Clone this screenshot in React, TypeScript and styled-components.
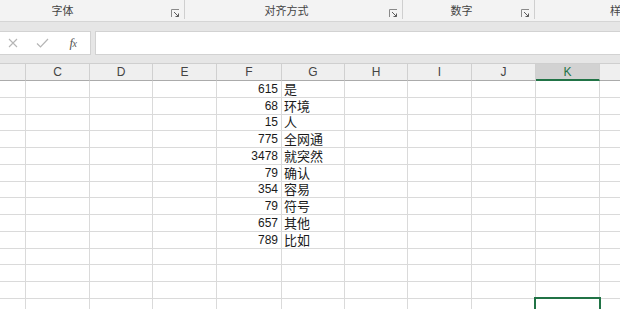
import styled, { createGlobalStyle } from 'styled-components';

const GlobalStyle = createGlobalStyle`
  html, body {
    margin: 0;
    padding: 0;
    background: #ffffff;
    overflow: hidden;
  }
  body {
    font-family: 'Liberation Sans', 'Noto Sans CJK SC', sans-serif;
  }
`;

const COLS = [26, 64, 63, 64, 65, 63, 63, 64, 64, 64, 40];
const LETTERS = ['', 'C', 'D', 'E', 'F', 'G', 'H', 'I', 'J', 'K', ''];
const ROW_HEIGHTS = [17, 17, 16, 17, 17, 17, 16, 17, 17, 17, 16, 17, 17, 20];
const SELECTED_COL = 9;
const SELECTED_ROW = 13;

const DATA: [number, string][] = [
  [615, '是'],
  [68, '环境'],
  [15, '人'],
  [775, '全网通'],
  [3478, '就突然'],
  [79, '确认'],
  [354, '容易'],
  [79, '符号'],
  [657, '其他'],
  [789, '比如'],
];

const GROUPS = [
  { label: '字体', width: 229, offset: -45, launcher: true },
  { label: '对齐方式', width: 217, offset: 0, launcher: true },
  { label: '数字', width: 131, offset: 0, launcher: true },
  { label: '样式', width: 172, offset: 0, launcher: false },
];

const Page = styled.div`
  width: 620px;
  height: 309px;
  overflow: hidden;
  background: #ffffff;
`;

const Ribbon = styled.div`
  display: flex;
  height: 21px;
  background: #f3f3f3;
  border-bottom: 1px solid #d5d5d5;
  overflow: hidden;
`;

const Group = styled.div<{ $w: number; $offset: number }>`
  flex: 0 0 ${p => p.$w}px;
  margin-left: ${p => p.$offset}px;
  display: flex;
  align-items: flex-end;
  height: 19px;
  border-right: 1px solid #cfcfcf;
`;

const GroupLabel = styled.div`
  flex: 1;
  text-align: center;
  font-family: 'Noto Sans CJK SC', sans-serif;
  font-size: 11px;
  line-height: 14px;
  padding-bottom: 2px;
  color: #444444;
  white-space: nowrap;
`;

const Launcher = styled.svg`
  flex: 0 0 9px;
  width: 9px;
  height: 9px;
  margin: 0 4px 1px 1px;
`;

const FormulaArea = styled.div`
  height: 41px;
  background: #e6e6e6;
  display: flex;
  align-items: flex-start;
  padding-top: 9px;
  box-sizing: border-box;
  gap: 3px;
`;

const FxBox = styled.div`
  width: 91px;
  height: 24px;
  box-sizing: border-box;
  background: #ffffff;
  border: 1px solid #d2d2d2;
  border-left: 0;
  display: flex;
  align-items: center;
`;

const FxButton = styled.div<{ $w: number }>`
  width: ${p => p.$w}px;
  display: flex;
  justify-content: center;
  align-items: center;
  color: #b5b5b5;
`;

const FxText = styled.span`
  font-family: 'Liberation Serif', serif;
  font-style: italic;
  font-size: 13px;
  color: #555555;
  letter-spacing: -0.5px;
`;

const FxSub = styled.span`
  font-size: 10px;
`;

const FormulaInput = styled.div`
  flex: 1;
  height: 24px;
  box-sizing: border-box;
  background: #ffffff;
  border: 1px solid #d2d2d2;
  border-right: 0;
  margin-left: 1px;
`;

const Grid = styled.div`
  display: grid;
  grid-template-columns: ${COLS.map(c => `${c}px`).join(' ')};
`;

const HeaderRow = styled(Grid)`
  height: 18px;
  background: #efefef;
  border-top: 1px solid #cfcfcf;
  box-sizing: border-box;
`;

const HeaderCell = styled.div<{ $selected?: boolean }>`
  box-sizing: border-box;
  height: 17px;
  border-right: 1px solid #d0d0d0;
  border-bottom: ${p => (p.$selected ? '2px solid #217346' : '1px solid #ababab')};
  background: ${p => (p.$selected ? '#d2d2d2' : 'transparent')};
  color: ${p => (p.$selected ? '#217346' : '#444444')};
  font-size: 12px;
  line-height: 16px;
  text-align: center;
`;

const Row = styled(Grid)<{ $h: number }>`
  height: ${p => p.$h}px;
`;

const Cell = styled.div<{ $align?: 'left' | 'right' }>`
  position: relative;
  box-sizing: border-box;
  border-right: 1px solid #dadada;
  border-bottom: 1px solid #dadada;
  display: flex;
  align-items: flex-end;
  justify-content: ${p => (p.$align === 'right' ? 'flex-end' : 'flex-start')};
  padding: 0 3px 1px 2px;
  color: #1a1a1a;
  white-space: nowrap;
`;

const NumberText = styled.span`
  display: block;
  font-family: 'Liberation Sans', sans-serif;
  font-size: 12px;
  line-height: 14px;
`;

const CjkText = styled.span`
  display: block;
  font-family: 'Noto Sans CJK SC', sans-serif;
  font-size: 13px;
  line-height: 14px;
`;

const Selection = styled.div`
  position: absolute;
  left: -2px;
  right: -2px;
  top: -2px;
  height: 40px;
  border: 2px solid #217346;
  pointer-events: none;
`;

function LauncherIcon() {
  return (
    <Launcher viewBox="0 0 9 9">
      <path d="M0.5 8V0.5H8" fill="none" stroke="#8a8a8a" strokeWidth="1" />
      <path d="M3 3L7.5 7.5M7.5 4.5V7.5H4.5" fill="none" stroke="#5a5a5a" strokeWidth="1" />
    </Launcher>
  );
}

export default function App() {
  return (
    <>
      <GlobalStyle />
      <Page>
        <Ribbon>
          {GROUPS.map(g => (
            <Group key={g.label} $w={g.width} $offset={g.offset}>
              <GroupLabel>{g.label}</GroupLabel>
              {g.launcher && <LauncherIcon />}
            </Group>
          ))}
        </Ribbon>

        <FormulaArea>
          <FxBox>
            <FxButton $w={26}>
              <svg width="10" height="10" viewBox="0 0 10 10">
                <path d="M1 1L9 9M9 1L1 9" stroke="#b5b5b5" strokeWidth="1.1" fill="none" />
              </svg>
            </FxButton>
            <FxButton $w={32}>
              <svg width="13" height="10" viewBox="0 0 13 10">
                <path d="M1 5.5L4.5 9L12 1" stroke="#b5b5b5" strokeWidth="1.2" fill="none" />
              </svg>
            </FxButton>
            <FxButton $w={30}>
              <FxText>
                f<FxSub>x</FxSub>
              </FxText>
            </FxButton>
          </FxBox>
          <FormulaInput />
        </FormulaArea>

        <HeaderRow>
          {LETTERS.map((l, i) => (
            <HeaderCell key={i} $selected={i === SELECTED_COL}>
              {l}
            </HeaderCell>
          ))}
        </HeaderRow>

        {ROW_HEIGHTS.map((h, r) => {
          const item = DATA[r];
          return (
            <Row key={r} $h={h}>
              {COLS.map((_, c) => (
                <Cell key={c} $align={c === 4 ? 'right' : 'left'}>
                  {item && c === 4 && <NumberText>{item[0]}</NumberText>}
                  {item && c === 5 && <CjkText>{item[1]}</CjkText>}
                  {r === SELECTED_ROW && c === SELECTED_COL && <Selection />}
                </Cell>
              ))}
            </Row>
          );
        })}
      </Page>
    </>
  );
}
